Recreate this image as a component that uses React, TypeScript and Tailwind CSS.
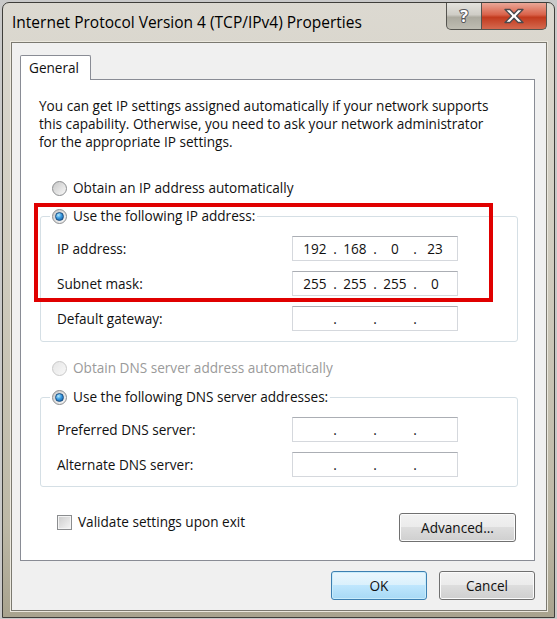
import { Fragment } from "react";

type RadioProps = { checked?: boolean; disabled?: boolean };

const Radio = ({ checked, disabled }: RadioProps) => (
  <span
    className={`flex h-[15px] w-[15px] shrink-0 items-center justify-center rounded-full border ${
      disabled
        ? "border-[#c9c9c9] bg-[linear-gradient(135deg,#e6e6e6,#f8f8f8)]"
        : "border-[#8b8d8f] bg-[linear-gradient(135deg,#c8c8c8,#f8f8f8)]"
    }`}
  >
    {checked && (
      <span className="h-[9px] w-[9px] rounded-full border border-[#1b4f83] bg-[radial-gradient(circle_at_35%_30%,#b6ecff_0%,#3a9ae0_45%,#0d4f91_100%)]" />
    )}
  </span>
);

const IpField = ({ parts }: { parts?: string[] }) => (
  <div className="flex h-[25px] w-[166px] items-center border border-[#d5d8dd] border-t-[#abaeb4] bg-white pl-[3px]">
    {[0, 1, 2, 3].map((i) => (
      <Fragment key={i}>
        <span className="w-[38px] text-center">{parts ? parts[i] : ""}</span>
        {i < 3 && <span className="flex w-[2px] justify-center">.</span>}
      </Fragment>
    ))}
  </div>
);

const Row = ({ label, parts }: { label: string; parts?: string[] }) => (
  <div className="flex h-[25px] items-center">
    <span className="w-[235px]">{label}</span>
    <IpField parts={parts} />
  </div>
);

const Button = ({ label, primary, className }: { label: string; primary?: boolean; className: string }) => (
  <button
    className={`flex items-center justify-center rounded-[3px] border ${
      primary
        ? "border-[#3c7fb1] bg-[linear-gradient(#eaf6fd_0%,#d9f0fc_50%,#bee6fd_50%,#a7d9f5_100%)] shadow-[inset_0_0_0_1px_#c8ecfb]"
        : "border-[#707070] bg-[linear-gradient(#f2f2f2_0%,#ebebeb_50%,#dddddd_50%,#cfcfcf_100%)] shadow-[inset_0_0_0_1px_#fbfbfb]"
    } ${className}`}
  >
    {label}
  </button>
);

export default function App() {
  return (
    <div className="relative h-[619px] w-[557px] overflow-hidden bg-[#c9c9c9] font-['Open_Sans',sans-serif] text-[13.6px] leading-[18px] text-[#111]">
      {/* window */}
      <div className="ml-[2px] mt-[2px] flex h-[616px] w-[553px] flex-col rounded-t-[7px] border border-[#3f3e3a] bg-[linear-gradient(#dcd9d1_0%,#d1cdc0_40%,#bdb8a6_85%,#a8a38e_100%)]">
        {/* title bar */}
        <div className="flex h-[39px] items-start justify-between pl-[9px] pr-[7px]">
          <span className="mt-[9px] text-[15.5px] leading-[20px] text-black">
            Internet Protocol Version 4 (TCP/IPv4) Properties
          </span>
          <div className="flex">
            <div className="flex h-[27px] w-[36px] items-center justify-center rounded-bl-[5px] border border-t-0 border-[#55544f] bg-[linear-gradient(#e4e3de_0%,#cfcdc6_45%,#acaa9f_55%,#bebcb2_100%)]">
              <span className="text-[16px] font-bold leading-none text-white [-webkit-text-stroke:2px_#56565a] [paint-order:stroke_fill]">
                ?
              </span>
            </div>
            <div className="flex h-[27px] w-[65px] items-center justify-center rounded-br-[5px] border border-l-0 border-t-0 border-[#55544f] bg-[linear-gradient(#eaa797_0%,#d9624a_45%,#c23a1e_55%,#d5694f_100%)]">
              <svg width="22" height="16" viewBox="0 0 22 16">
                <path
                  d="M2 1.5h5l4 4.2 4-4.2h5l-6.4 6.5 6.4 6.5h-5l-4-4.2-4 4.2H2l6.4-6.5z"
                  fill="#fff"
                  stroke="#4a4a4e"
                  strokeWidth="1.3"
                  strokeLinejoin="round"
                />
              </svg>
            </div>
          </div>
        </div>

        {/* client area */}
        <div className="ml-[8px] flex w-[536px] flex-col border border-[#7b7970] bg-[#f0f0f0] shadow-[0_0_0_1px_#ebe8de]">
          {/* tab */}
          <div className="relative z-10 -mb-px ml-[8px] mt-[12px] flex h-[25px] w-[71px] items-center rounded-t-[2px] border border-b-0 border-[#898c95] bg-white pl-[8px]">
            General
          </div>

          {/* tab panel */}
          <div className="ml-[8px] w-[515px] border border-[#898c95] bg-white pb-[18px] pt-[17px]">
            <p className="pl-[18px]">
              You can get IP settings assigned automatically if your network supports
              <br />
              this capability. Otherwise, you need to ask your network administrator
              <br />
              for the appropriate IP settings.
            </p>

            <div className="ml-[31px] mt-[28px] flex h-[18px] items-center gap-[6px]">
              <Radio />
              <span>Obtain an IP address automatically</span>
            </div>

            <fieldset className="ml-[19px] mt-[10px] w-[478px] rounded-[3px] border border-[#d5dfe5]">
              <legend className="ml-[9px] flex h-[18px] items-center gap-[6px] px-[2px]">
                <Radio checked />
                <span>Use the following IP address:</span>
              </legend>
              <div className="flex flex-col gap-[10px] pb-[10px] pl-[16px] pt-[11px]">
                <Row label="IP address:" parts={["192", "168", "0", "23"]} />
                <Row label="Subnet mask:" parts={["255", "255", "255", "0"]} />
                <Row label="Default gateway:" />
              </div>
            </fieldset>

            <div className="ml-[31px] mt-[17px] flex h-[18px] items-center gap-[6px] text-[#9a9a9a]">
              <Radio disabled />
              <span>Obtain DNS server address automatically</span>
            </div>

            <fieldset className="ml-[19px] mt-[11px] w-[478px] rounded-[3px] border border-[#d5dfe5]">
              <legend className="ml-[9px] flex h-[18px] items-center gap-[6px] px-[2px]">
                <Radio checked />
                <span>Use the following DNS server addresses:</span>
              </legend>
              <div className="flex flex-col gap-[10px] pb-[9px] pl-[16px] pt-[11px]">
                <Row label="Preferred DNS server:" />
                <Row label="Alternate DNS server:" />
              </div>
            </fieldset>

            <div className="mt-[26px] flex items-start justify-between pl-[36px] pr-[18px]">
              <div className="flex h-[18px] items-center gap-[6px]">
                <span className="h-[15px] w-[15px] border border-[#8b8d8f] bg-[linear-gradient(135deg,#cbcbcb,#f6f6f6)] shadow-[inset_0_0_0_1px_#f4f4f4]" />
                <span>Validate settings upon exit</span>
              </div>
              <Button label="Advanced..." className="h-[29px] w-[117px]" />
            </div>
          </div>

          {/* dialog buttons */}
          <div className="mt-[10px] flex justify-end gap-[12px] pb-[10px] pr-[11px]">
            <Button label="OK" primary className="h-[29px] w-[96px]" />
            <Button label="Cancel" className="h-[29px] w-[96px]" />
          </div>
        </div>
      </div>

      {/* red annotation box */}
      <div className="absolute left-[34px] top-[203px] h-[99px] w-[459px] border-[4px] border-[#e00000]" />
    </div>
  );
}
